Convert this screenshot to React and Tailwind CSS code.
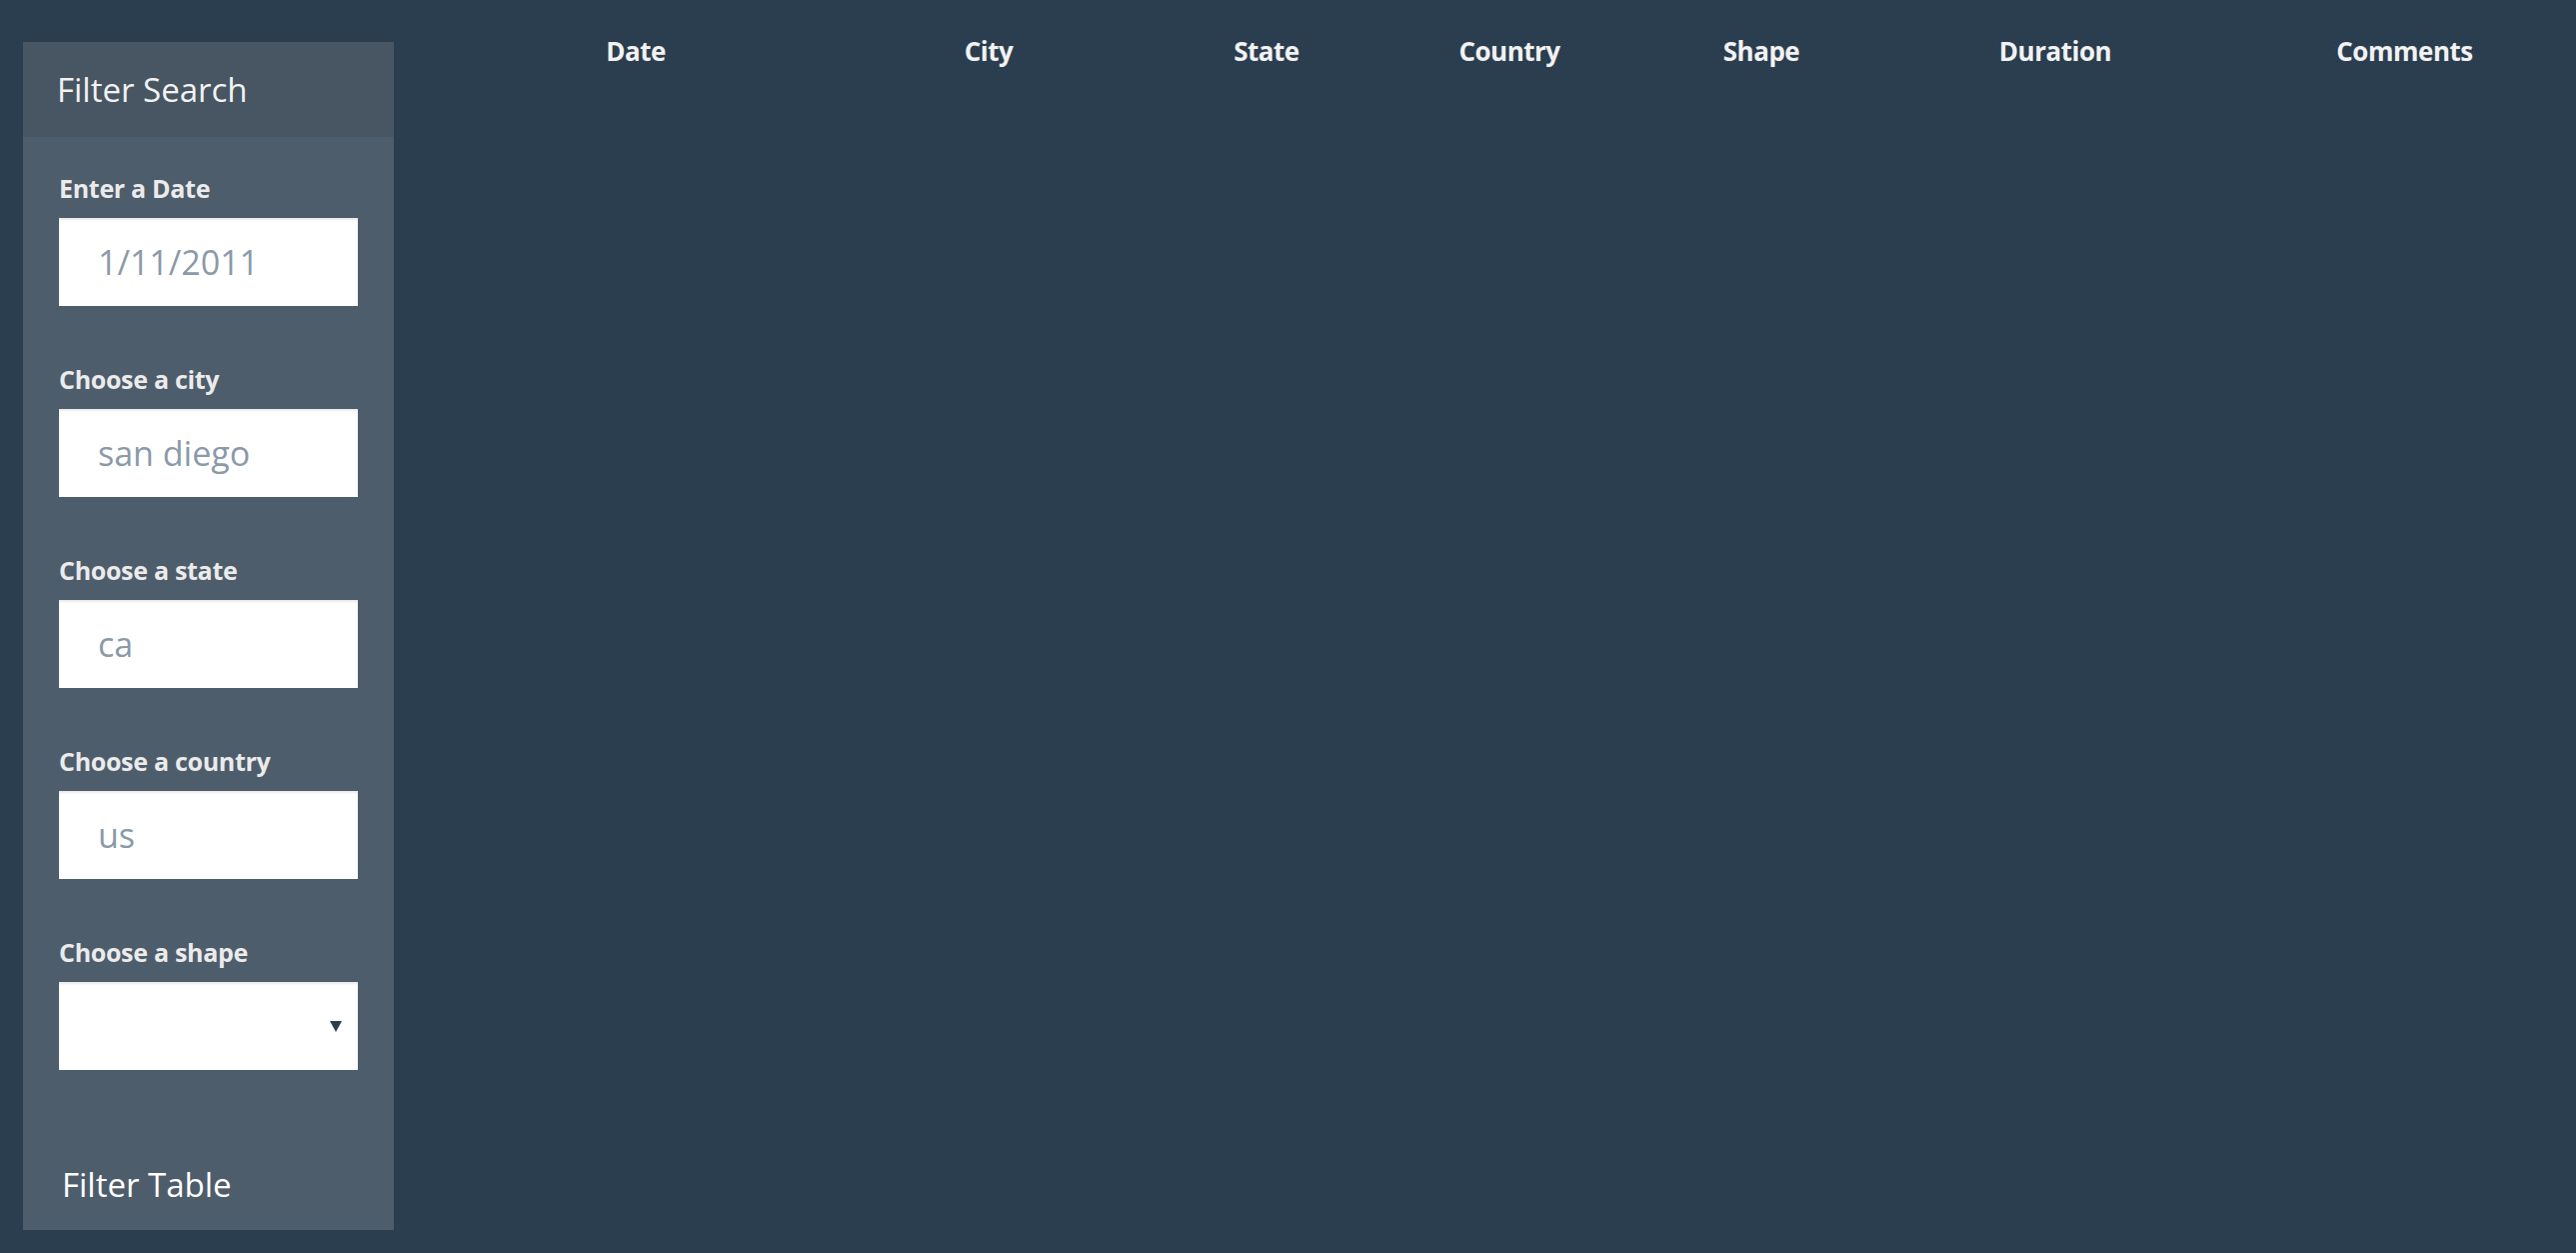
import { useState } from "react";

const FIELDS = [
  { id: "datetime", label: "Enter a Date", placeholder: "1/11/2011" },
  { id: "city", label: "Choose a city", placeholder: "san diego" },
  { id: "state", label: "Choose a state", placeholder: "ca" },
  { id: "country", label: "Choose a country", placeholder: "us" },
];

const COLUMNS = ["Date", "City", "State", "Country", "Shape", "Duration", "Comments"];

export default function App() {
  const [shape, setShape] = useState("");

  return (
    <div className="min-h-screen w-full bg-[#2b3e50] text-white flex items-start" style={{ fontFamily: '"Open Sans", "Noto Sans", sans-serif' }}>
      {/* Sidebar panel */}
      <aside className="ml-[23px] mt-[42px] w-[371px] shrink-0 bg-[#4e5d6c]">
        <div className="h-[95px] bg-[#485563] flex items-center pl-[34px]">
          <h3 className="text-[33px] leading-[46px] font-normal text-[#f2f2f2]">Filter Search</h3>
        </div>
        <div className="px-[36px] pt-[34px] pb-[22px]">
          <form className="flex flex-col gap-[56px]">
            {FIELDS.map((f) => (
              <div key={f.id} className="flex flex-col gap-[13px]">
                <label htmlFor={f.id} className="text-[25px] leading-[34px] font-bold text-[#ebebeb] tracking-[-0.3px]">{f.label}</label>
                <input
                  id={f.id}
                  type="text"
                  placeholder={f.placeholder}
                  className="h-[88px] w-[299px] bg-white pl-[39px] text-[34px] text-[#2b3e50] placeholder-[#8b9aa9] outline-none shadow-[inset_0_2px_2px_rgba(0,0,0,0.08)]"
                />
              </div>
            ))}
            <div className="flex flex-col gap-[13px]">
              <label htmlFor="shape" className="text-[25px] leading-[34px] font-bold text-[#ebebeb] tracking-[-0.3px]">Choose a shape</label>
              <div className="relative h-[88px] w-[299px] bg-white shadow-[inset_0_2px_2px_rgba(0,0,0,0.08)]">
                <select
                  id="shape"
                  value={shape}
                  onChange={(e) => setShape(e.target.value)}
                  className="h-full w-full appearance-none bg-transparent pl-[40px] text-[34px] text-[#2b3e50] outline-none"
                >
                  <option value=""></option>
                  <option value="light">light</option>
                  <option value="circle">circle</option>
                  <option value="triangle">triangle</option>
                </select>
                <svg className="pointer-events-none absolute right-[16px] top-[39px]" width="12" height="11" viewBox="0 0 12 11">
                  <path d="M0 0 H12 L6 11 Z" fill="#2b3e50" />
                </svg>
              </div>
            </div>
          </form>
          <button type="button" className="mt-[92px] ml-[3px] text-[33px] leading-[46px] font-normal text-white">Filter Table</button>
        </div>
      </aside>

      {/* Table */}
      <main className="ml-[60px] flex-1 pt-[33px]">
        <table className="w-full">
          <thead>
            <tr className="grid grid-cols-[364px_342px_214px_272px_232px_356px_1fr]">
              {COLUMNS.map((c) => (
                <th key={c} className="text-center text-[26px] leading-[36px] font-bold text-[#f2f2f2] tracking-[-0.5px]">{c}</th>
              ))}
            </tr>
          </thead>
          <tbody></tbody>
        </table>
      </main>
    </div>
  );
}
